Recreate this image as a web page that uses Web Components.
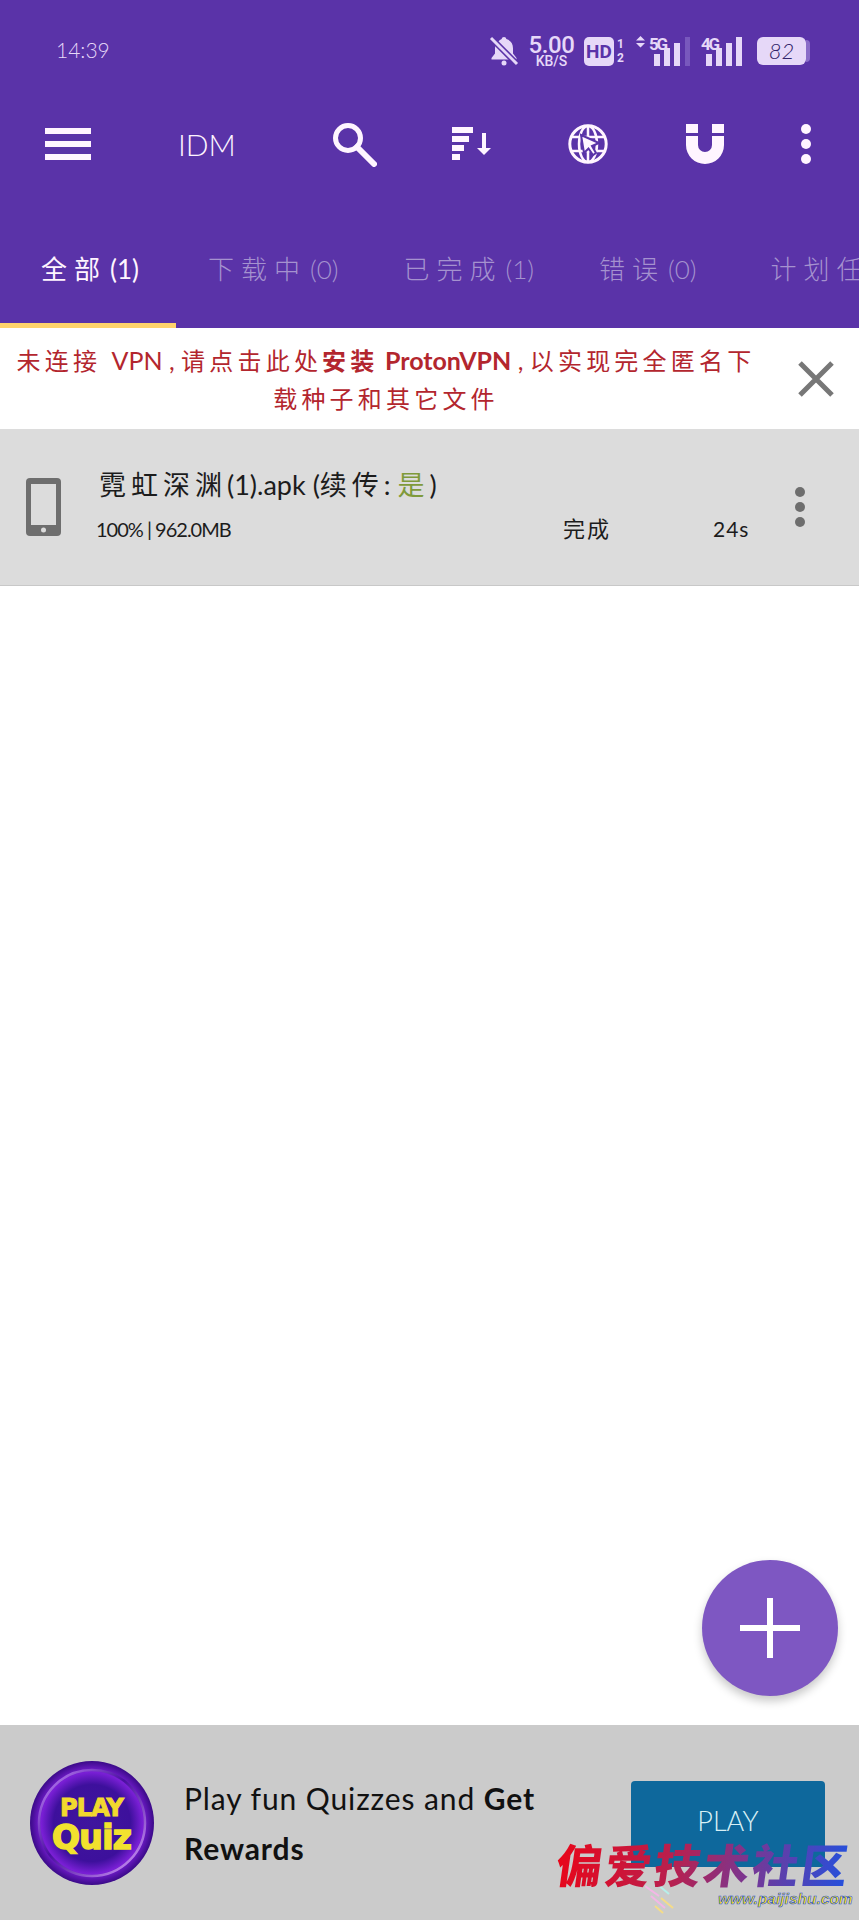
<!DOCTYPE html>
<html lang="zh">
<head>
<meta charset="utf-8">
<title>IDM</title>
<style>
  html, body { margin: 0; padding: 0; }
  body {
    width: 859px;
    height: 1920px;
    overflow: hidden;
    position: relative;
    display: flex;
    flex-direction: column;
    background: #fff;
    font-family: Lato, "Noto Sans CJK SC", sans-serif;
    font-weight: 300;
  }
  idm-tab:last-child { margin-left: 9px; }
</style>
</head>
<body>
  <idm-header>
    <idm-tab active count="(1)">全部</idm-tab>
    <idm-tab count="(0)">下载中</idm-tab>
    <idm-tab count="(1)">已完成</idm-tab>
    <idm-tab count="(0)">错误</idm-tab>
    <idm-tab>计划任务</idm-tab>
  </idm-header>
  <vpn-banner>未连接 <span class="lat">VPN , </span>请点击此处<b>安装</b><span class="lat"> </span><b class="lat">ProtonVPN</b><span class="lat"> , </span>以实现完全匿名下<br>载种子和其它文件</vpn-banner>
  <download-item name="霓虹深渊" ext="(1).apk" info="100% | 962.0MB" state="完成" time="24s"></download-item>
  <idm-spacer></idm-spacer>
  <ad-bar>Play fun Quizzes and <b>Get Rewards</b></ad-bar>
  <fab-button></fab-button>
  <water-mark></water-mark>

<script>
class IdmStatusBar extends HTMLElement {
  constructor() {
    super();
    this.attachShadow({ mode: "open" });
    this.shadowRoot.innerHTML = `
      <style>
        :host { display: flex; align-items: center; height: 102px; padding-left: 56px; color: #e6d8f8; box-sizing: border-box; }
        .time { font-size: 21px; width: 433px; position: relative; top: -2px; }
        svg { display: block; overflow: visible; }
        .speed { width: 47px; margin-left: 9px; text-align: center; font-family: Roboto, sans-serif; font-weight: 500; }
        .speed div:first-child { font-size: 24px; line-height: 20px; letter-spacing: -0.4px; }
        .speed div:last-child { font-size: 14px; line-height: 12px; }
        .hd { width: 30px; height: 29px; margin-left: 9px; border-radius: 5px; background: #e6d8f8; color: #5a33a8; font: 700 19px/29px Roboto, sans-serif; text-align: center; }
        .sims { width: 8px; margin-left: 3px; font: 700 12px/14px Roboto, sans-serif; }
        .sig { margin-left: 11px; }
        .sig2 { margin-left: 10px; }
        .batt { margin-left: 14px; display: flex; align-items: center; }
        .cell { width: 49px; height: 28px; border-radius: 6px; background: #e6d8f8; color: #33246a; font-size: 22px; line-height: 28px; text-align: center; font-style: italic; }
        .tip { width: 4px; height: 22px; background: #8a6cc8; border-radius: 0 4px 4px 0; }
      </style>
      <span class="time">14:39</span>
      <svg width="30" height="30" viewBox="0 0 30 30" fill="#e6d8f8">
        <path d="M15 1c1.300 0 2.200.9 2.300 2.100 4.400 1 6.700 4.600 6.700 9.100v5.300l3.500 4.500v1.500H2.500V22L6 17.500v-5.300c0-1.500.3-2.800.8-4L4 5l2-2 3 3C10.300 4.500 11.600 3.600 12.700 3.100 12.800 1.900 13.700 1 15 1z"/>
        <circle cx="15" cy="27" r="2.500"/>
        <path d="M2 2 L28 28" stroke="#5a33a8" stroke-width="6"/>
        <path d="M2 2 L28 28" stroke="#e6d8f8" stroke-width="3"/>
      </svg>
      <div class="speed"><div>5.00</div><div>KB/S</div></div>
      <div class="hd">HD</div>
      <div class="sims">1<br>2</div>
      <svg class="sig" width="55" height="30" viewBox="0 0 55 30" fill="#e6d8f8">
        <path d="M4.500 0 L9 4.500 H0z M0 7 H9 L4.500 11.500z"/>
        <text x="13" y="14" font-family="Roboto, sans-serif" font-weight="700" font-size="17" fill="#e6d8f8" textLength="19">5G</text>
        <rect x="18" y="18" width="6" height="12"/>
        <rect x="28" y="12" width="6" height="18"/>
        <rect x="38" y="7" width="6" height="23"/>
        <rect x="49" y="1" width="5" height="29" fill="#7858bd"/>
      </svg>
      <svg class="sig2" width="42" height="30" viewBox="0 0 42 30" fill="#e6d8f8">
        <text x="0" y="14" font-family="Roboto, sans-serif" font-weight="700" font-size="17" fill="#e6d8f8" textLength="19">4G</text>
        <rect x="5" y="18" width="6" height="12"/>
        <rect x="15" y="12" width="6" height="18"/>
        <rect x="25" y="7" width="6" height="23"/>
        <rect x="35" y="1" width="6" height="29"/>
      </svg>
      <div class="batt"><div class="cell">82</div><div class="tip"></div></div>
    `;
  }
}
customElements.define("idm-status-bar", IdmStatusBar);

class IdmToolbar extends HTMLElement {
  constructor() {
    super();
    this.attachShadow({ mode: "open" });
    this.shadowRoot.innerHTML = `
      <style>
        :host { display: flex; align-items: center; height: 84px; padding-left: 45px; color: #fff5ff; }
        svg { display: block; flex: none; }
        .title { font-size: 30px; width: 155px; margin-left: 87px; line-height: 40px; }
        .search { position: relative; top: 1px; }
        .sort { margin-left: 75px; }
        .globe { margin-left: 74px; }
        .magnet { margin-left: 78px; }
        .more { margin-left: 76px; }
      </style>
      <svg width="46" height="32" viewBox="0 0 46 32" fill="#fff5ff">
        <rect y="0" width="46" height="6"/><rect y="13" width="46" height="6"/><rect y="26" width="46" height="6"/>
      </svg>
      <span class="title">IDM</span>
      <svg class="search" width="44" height="44" viewBox="0 0 44 44" fill="none" stroke="#fff5ff">
        <circle cx="15" cy="15" r="12.500" stroke-width="5"/>
        <path d="M24 24 L41 41" stroke-width="6" stroke-linecap="round"/>
      </svg>
      <svg class="sort" width="42" height="34" viewBox="0 0 42 34" fill="#fff5ff">
        <rect x="0" y="0" width="21" height="6"/>
        <rect x="0" y="9" width="17" height="6"/>
        <rect x="0" y="18" width="12" height="6"/>
        <rect x="0" y="27" width="8" height="6"/>
        <rect x="30" y="6" width="4" height="17"/>
        <path d="M25 21 H39 L32 28z"/>
      </svg>
      <svg class="globe" width="40" height="40" viewBox="0 0 40 40" fill="none" stroke="#fff5ff" stroke-width="2.500">
        <circle cx="20" cy="20" r="18.200" stroke-width="3"/>
        <ellipse cx="20" cy="20" rx="9" ry="18"/>
        <path d="M20 2 V38 M3 13 H37 M3 27 H37"/>
        <path d="M13 11 L31 19 L24 22 L28 29 L25 31 L20.500 24.500 L16 29z" fill="#fff5ff" stroke="#5a33a8" stroke-width="2"/>
      </svg>
      <svg class="magnet" width="38" height="40" viewBox="0 0 38 40" fill="#fff5ff">
        <rect x="0" y="0" width="12" height="9"/><rect x="26" y="0" width="12" height="9"/>
        <path d="M0 12 V21 A19 19 0 0 0 38 21 V12 H26 V21 A7 7 0 0 1 12 21 V12z"/>
      </svg>
      <svg class="more" width="12" height="40" viewBox="0 0 12 40" fill="#fff5ff">
        <circle cx="6" cy="5" r="5"/><circle cx="6" cy="20" r="5"/><circle cx="6" cy="35" r="5"/>
      </svg>
    `;
  }
}
customElements.define("idm-toolbar", IdmToolbar);

class IdmTab extends HTMLElement {
  constructor() {
    super();
    this.attachShadow({ mode: "open" });
    this.shadowRoot.innerHTML = `
      <style>
        :host { display: block; flex: none; height: 118px; box-sizing: border-box; padding: 39px 33px 0 32px; color: #a592cf; font-size: 26px; line-height: 40px; white-space: nowrap; border-bottom: 5px solid transparent; }
        :host([active]) { color: #fff5ff; font-weight: 400; border-bottom-color: #ffd36b; padding-left: 41px; padding-right: 37px; }
        .label { letter-spacing: 7px; }
        .count { font-size: 26px; margin-left: 3px; }
      </style>
      <span class="label"><slot></slot></span><span class="count"></span>
    `;
  }

  connectedCallback() {
    this.shadowRoot.querySelector(".count").textContent = this.getAttribute("count") || "";
  }
}
customElements.define("idm-tab", IdmTab);

class IdmHeader extends HTMLElement {
  constructor() {
    super();
    this.attachShadow({ mode: "open" });
    this.shadowRoot.innerHTML = `
      <style>
        :host { display: block; flex: none; height: 328px; background: #5a33a8; overflow: hidden; }
        .tabs { display: flex; margin-top: 24px; }
      </style>
      <idm-status-bar></idm-status-bar>
      <idm-toolbar></idm-toolbar>
      <div class="tabs"><slot></slot></div>
    `;
  }
}
customElements.define("idm-header", IdmHeader);

class VpnBanner extends HTMLElement {
  constructor() {
    super();
    this.attachShadow({ mode: "open" });
    this.shadowRoot.innerHTML = `
      <style>
        :host { display: flex; flex: none; align-items: center; height: 101px; box-sizing: border-box; padding-left: 14px; background: #fff; }
        .text { width: 744px; text-align: center; color: #b3262e; font-size: 24px; line-height: 38px; letter-spacing: 4.2px; font-weight: 400; padding-top: 1px; white-space: nowrap; }
        ::slotted(b) { font-weight: 700; }
        ::slotted(.lat) { letter-spacing: 0; font-size: 25px; }
        svg { margin-left: 40px; display: block; }
      </style>
      <div class="text"><slot></slot></div>
      <svg width="36" height="36" viewBox="0 0 36 36" fill="none" stroke="#777" stroke-width="5"><path d="M2 2 L34 34 M34 2 L2 34"/></svg>
    `;
  }
}
customElements.define("vpn-banner", VpnBanner);

class DownloadItem extends HTMLElement {
  constructor() {
    super();
    this.attachShadow({ mode: "open" });
    this.shadowRoot.innerHTML = `
      <style>
        :host { display: flex; flex: none; align-items: center; height: 157px; box-sizing: border-box; padding-left: 26px; background: #dcdcdc; border-bottom: 1px solid #c8c8c8; color: #1c1c1c; }
        svg { display: block; flex: none; }
        .body { width: 691px; margin-left: 38px; }
        .title { font-size: 27px; line-height: 40px; letter-spacing: 5px; font-weight: 400; margin-top: -5px; white-space: nowrap; }
        .title .lat { letter-spacing: 0; }
        .title em { font-style: normal; color: #7f9a3a; }
        .meta { display: flex; margin-top: 9px; font-size: 20px; line-height: 30px; font-weight: 400; }
        .info { width: 467px; margin-left: -3px; letter-spacing: -1px; }
        .state { width: 150px; letter-spacing: 2px; font-size: 22px; }
        .time { font-size: 21px; letter-spacing: 1px; }
      </style>
      <svg width="35" height="58" viewBox="0 0 35 58">
        <rect width="35" height="58" rx="4" fill="#6e6e6e"/>
        <rect x="5" y="6" width="25" height="41" fill="#dcdcdc"/>
        <circle cx="17.500" cy="52" r="2.500" fill="#dcdcdc"/>
      </svg>
      <div class="body">
        <div class="title"><span class="name"></span><span class="lat ext"></span><span class="lat"> (</span>续传<span class="lat">: </span><em>是</em><span class="lat">)</span></div>
        <div class="meta"><span class="info"></span><span class="state"></span><span class="time"></span></div>
      </div>
      <svg width="12" height="42" viewBox="0 0 12 42" fill="#6e6e6e" style="margin-left:4px">
        <circle cx="6" cy="6" r="5"/><circle cx="6" cy="21" r="5"/><circle cx="6" cy="36" r="5"/>
      </svg>
    `;
  }

  connectedCallback() {
    const root = this.shadowRoot;
    root.querySelector(".name").textContent = this.getAttribute("name");
    root.querySelector(".ext").textContent = this.getAttribute("ext");
    root.querySelector(".info").textContent = this.getAttribute("info");
    root.querySelector(".state").textContent = this.getAttribute("state");
    root.querySelector(".time").textContent = this.getAttribute("time");
  }
}
customElements.define("download-item", DownloadItem);

class IdmSpacer extends HTMLElement {
  constructor() {
    super();
    this.attachShadow({ mode: "open" });
    this.shadowRoot.innerHTML = `<style>:host { display: block; flex: 1; background: #fff; }</style>`;
  }
}
customElements.define("idm-spacer", IdmSpacer);

class AdBar extends HTMLElement {
  constructor() {
    super();
    this.attachShadow({ mode: "open" });
    this.shadowRoot.innerHTML = `
      <style>
        :host { display: flex; flex: none; align-items: center; height: 195px; box-sizing: border-box; padding-left: 30px; background: #cbcbcb; color: #111; }
        svg { display: block; flex: none; }
        .text { width: 380px; margin-left: 30px; font-size: 30px; line-height: 50px; letter-spacing: 0.9px; font-weight: 400; }
        ::slotted(b) { font-weight: 700; }
        .btn { width: 194px; height: 86px; margin-left: 67px; margin-top: 2px; border-radius: 4px; background: #0e689c; color: #d8f0f5; font-size: 27px; line-height: 80px; text-align: center; }
      </style>
      <svg width="124" height="124" viewBox="0 0 124 124">
        <defs>
          <radialGradient id="disc" cx="50%" cy="50%" r="50%">
            <stop offset="0%" stop-color="#3f169e"/><stop offset="62%" stop-color="#3d109c"/><stop offset="82%" stop-color="#7a1fd6"/><stop offset="100%" stop-color="#3a0a88"/>
          </radialGradient>
          <linearGradient id="rim" x1="0" y1="0" x2="1" y2="1">
            <stop offset="0%" stop-color="#c98cff"/><stop offset="45%" stop-color="#4a0fa0"/><stop offset="100%" stop-color="#d9a0ff"/>
          </linearGradient>
        </defs>
        <circle cx="62" cy="62" r="62" fill="url(#disc)"/>
        <circle cx="62" cy="62" r="53" fill="none" stroke="url(#rim)" stroke-width="2.500"/>
        <text x="62" y="55" text-anchor="middle" font-family="'DejaVu Sans', sans-serif" font-weight="700" font-size="24" fill="#f2d92e" stroke="#f2d92e" stroke-width="1" textLength="64">PLAY</text>
        <text x="62" y="88" text-anchor="middle" font-family="'DejaVu Sans', sans-serif" font-weight="700" font-size="33" fill="#f2e22e" stroke="#f2e22e" stroke-width="1.500" textLength="80">Quiz</text>
      </svg>
      <div class="text"><slot></slot></div>
      <div class="btn">PLAY</div>
    `;
  }
}
customElements.define("ad-bar", AdBar);

class FabButton extends HTMLElement {
  constructor() {
    super();
    this.attachShadow({ mode: "open" });
    this.shadowRoot.innerHTML = `
      <style>
        :host { position: absolute; left: 702px; top: 1560px; width: 136px; height: 136px; border-radius: 50%; background: #7e57c2; box-shadow: 0 5px 10px rgba(0,0,0,.22); display: flex; align-items: center; justify-content: center; }
        svg { display: block; }
      </style>
      <svg width="60" height="60" viewBox="0 0 60 60" stroke="#fff" stroke-width="6"><path d="M30 0 V60 M0 30 H60"/></svg>
    `;
  }
}
customElements.define("fab-button", FabButton);

class WaterMark extends HTMLElement {
  constructor() {
    super();
    this.attachShadow({ mode: "open" });
    this.shadowRoot.innerHTML = `
      <style>
        :host { position: absolute; left: 557px; top: 1834px; width: 300px; height: 86px; }
        .cn { position: absolute; left: 0; top: 0; width: 292px; font: 900 46px/58px "Noto Sans CJK SC", sans-serif; letter-spacing: 3px; white-space: nowrap; transform: skewX(-8deg); background: linear-gradient(90deg, #e8061a 0%, #b8204f 40%, #6f3a9c 70%, #2450dd 100%); -webkit-background-clip: text; background-clip: text; color: transparent; }
        .url { position: absolute; left: 161px; top: 55px; font: italic 700 15.500px/20px "Liberation Sans", sans-serif; color: #f7e017; -webkit-text-stroke: .6px #2450dd; white-space: nowrap; }
        svg { position: absolute; left: 88px; top: 50px; }
      </style>
      <svg width="34" height="30" viewBox="0 0 34 30" fill="none" stroke-width="2">
        <path d="M0 2 L14 12" stroke="#f4b6e6"/><path d="M12 0 L24 10" stroke="#b6f0ea"/><path d="M6 12 L20 24" stroke="#f4b6e6"/><path d="M16 14 L28 24" stroke="#f5dc88"/><path d="M10 22 L18 29" stroke="#f5dc88"/>
      </svg>
      <div class="cn">偏爱技术社区</div>
      <div class="url">www.paijishu.com</div>
    `;
  }
}
customElements.define("water-mark", WaterMark);
</script>
</body>
</html>
